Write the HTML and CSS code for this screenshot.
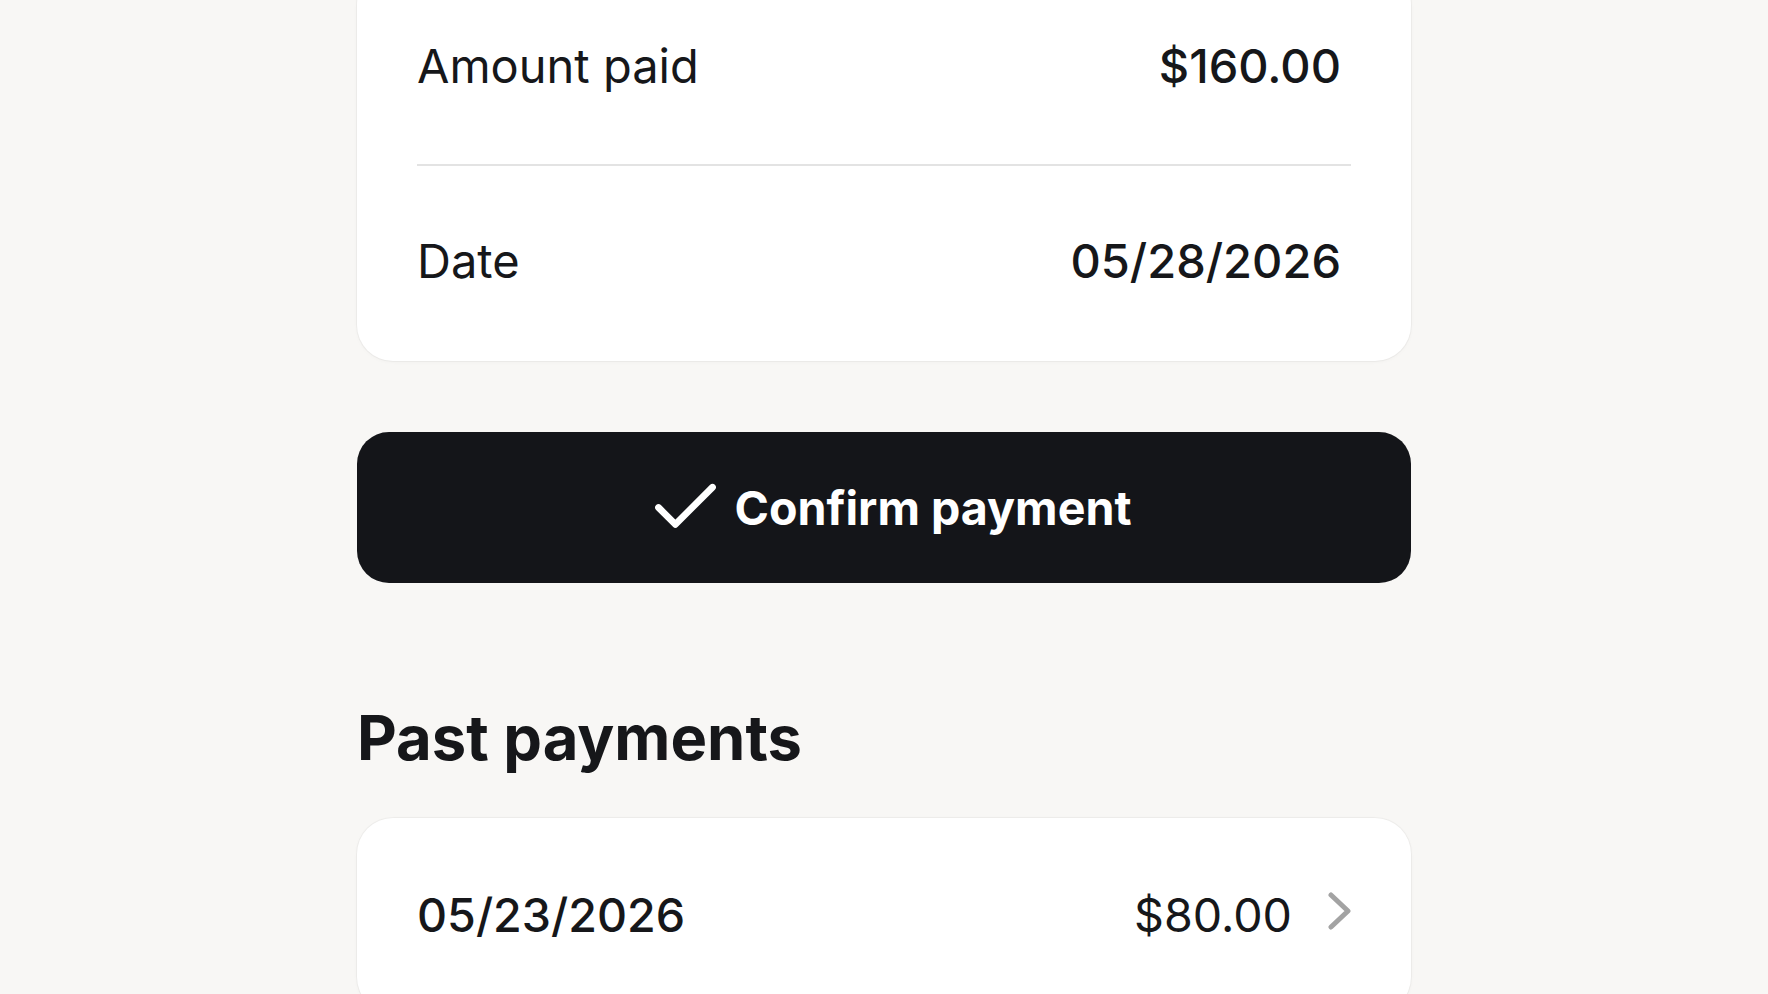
FILE: index.html
```html
<!DOCTYPE html>
<html lang="en">
<head>
<meta charset="utf-8">
<title>Confirm payment</title>
<link rel="stylesheet" href="styles.css">
</head>
<body>
<main class="page">
  <section class="card summary">
    <div class="row">
      <span class="label">Amount paid</span>
      <span class="value strong">$160.00</span>
    </div>
    <div class="divider"></div>
    <div class="row">
      <span class="label">Date</span>
      <span class="value strong">05/28/2026</span>
    </div>
  </section>

  <button class="confirm" type="button">
    <svg class="check" viewBox="0 0 24 24" fill="none" stroke="currentColor" stroke-width="2" stroke-linecap="round" stroke-linejoin="round" aria-hidden="true"><path d="M20 6 9 17l-5-5"/></svg>
    <span>Confirm payment</span>
  </button>

  <h2 class="section-title">Past payments</h2>

  <section class="card history">
    <div class="row">
      <span class="label medium">05/23/2026</span>
      <span class="amount">
        <span class="value">$80.00</span>
        <svg class="chevron" viewBox="0 0 23 38" fill="none" stroke="currentColor" stroke-width="5" stroke-linecap="round" stroke-linejoin="round" aria-hidden="true"><polyline points="3,3 20,19 3,35"/></svg>
      </span>
    </div>
  </section>
</main>
</body>
</html>
```

FILE: styles.css
```css
* {
  box-sizing: border-box;
}

html, body {
  margin: 0;
  padding: 0;
  background: #f8f7f5;
  height: 100%;
  overflow: hidden;
}

body {
  font-family: "Inter", "Noto Sans", "Liberation Sans", sans-serif;
  color: #16171a;
}

.page {
  width: 1054px;
  margin: -31px auto 0;
  display: flex;
  flex-direction: column;
}

.card {
  background: #ffffff;
  border-radius: 36px;
  padding: 0 60px;
  box-shadow: 0 0 0 1px rgba(0, 0, 0, 0.035), 0 1px 4px rgba(0, 0, 0, 0.03);
}

.row {
  display: flex;
  align-items: center;
  justify-content: space-between;
  padding: 69px 0 70px;
  line-height: 56px;
  font-size: 47px;
}

.summary .row + .divider + .row {
  padding: 67px 0 72px;
}

.history .row {
  font-size: 46.6px;
}

.label {
  font-weight: 400;
}

.label.medium {
  font-weight: 500;
}

.value {
  font-weight: 400;
}

.value.strong {
  font-weight: 500;
}

.summary .value {
  padding-right: 10px;
}

.divider {
  height: 2px;
  background: #e3e3e3;
}

.confirm {
  margin-top: 71px;
  height: 151px;
  border: none;
  border-radius: 32px;
  background: #141519;
  color: #ffffff;
  font-family: inherit;
  font-size: 46.6px;
  font-weight: 700;
  display: flex;
  align-items: center;
  justify-content: center;
  gap: 9px;
  padding: 0 0 0 8px;
  cursor: pointer;
}

.check {
  width: 81px;
  height: 81px;
  flex: none;
}

.section-title {
  margin: 119px 0 0;
  font-size: 61.5px;
  line-height: 72px;
  font-weight: 700;
  letter-spacing: 0;
}

.history {
  margin-top: 44px;
}

.history .row {
  padding-top: 69px;
}

.amount {
  display: flex;
  align-items: center;
  gap: 36px;
}

.chevron {
  width: 23px;
  height: 38px;
  color: #a3a3a3;
  margin-top: -8px;
  flex: none;
}
```
